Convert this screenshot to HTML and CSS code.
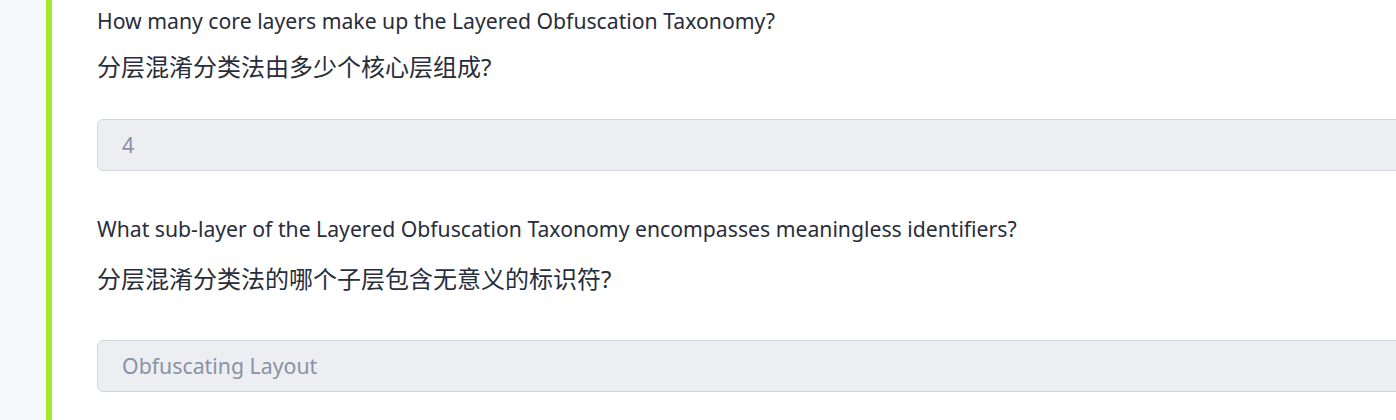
FILE: index.html
```html
<!DOCTYPE html>
<html lang="en">
<head>
<meta charset="utf-8">
<title>Layered Obfuscation Taxonomy Quiz</title>
<link rel="stylesheet" href="styles.css">
</head>
<body>
<div class="page">
  <aside class="sidebar"></aside>
  <div class="accent"></div>
  <main class="content">
    <section class="qa">
      <p class="q-en">How many core layers make up the Layered Obfuscation Taxonomy?</p>
      <p class="q-zh">分层混淆分类法由多少个核心层组成?</p>
      <div class="answer">4</div>
    </section>
    <section class="qa qa--loose">
      <p class="q-en">What sub-layer of the Layered Obfuscation Taxonomy encompasses meaningless identifiers?</p>
      <p class="q-zh">分层混淆分类法的哪个子层包含无意义的标识符?</p>
      <div class="answer">Obfuscating Layout</div>
    </section>
  </main>
</div>
</body>
</html>
```
FILE: styles.css
```css
html, body {
  margin: 0;
  padding: 0;
  height: 100%;
  background: #ffffff;
  overflow: hidden;
}

.page {
  display: flex;
  height: 420px;
  width: 1396px;
  font-family: "Noto Sans", "Noto Sans CJK SC", sans-serif;
  color: #282d3b;
}

.sidebar {
  width: 46px;
  flex: none;
  background: #f7f8fa;
}

.accent {
  width: 6px;
  flex: none;
  background: #a6e928;
}

.content {
  flex: 1;
  padding: 0 0 0 45px;
  margin-right: -40px;
  display: flex;
  flex-direction: column;
  min-width: 0;
}

.qa {
  display: flex;
  flex-direction: column;
}

.q-en {
  margin: 7px 0 0;
  font-size: 21.2px;
  line-height: 28px;
  white-space: nowrap;
}

.q-zh {
  margin: 16px 0 0;
  font-size: 24px;
  line-height: 32px;
  white-space: nowrap;
}

.answer {
  margin-top: 36px;
  height: 50px;
  box-sizing: content-box;
  border: 1px solid #d3d6dc;
  border-radius: 6px;
  background: #eceef2;
  color: #8a92a6;
  font-size: 21.3px;
  line-height: 50px;
  padding: 0 24px;
}

.qa--loose .q-en {
  margin-top: 44px;
}

.qa--loose .q-zh {
  margin-top: 20px;
}

.qa--loose .answer {
  margin-top: 45px;
}
```
